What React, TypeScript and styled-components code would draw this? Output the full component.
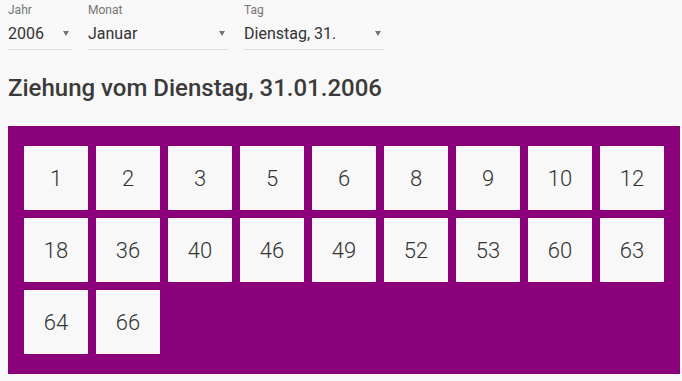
import React from "react";
import styled, { createGlobalStyle } from "styled-components";

const GlobalStyle = createGlobalStyle`
  html, body {
    margin: 0;
    padding: 0;
    background: #f8f8f8;
    font-family: Roboto, "Noto Sans", sans-serif;
    color: #333;
  }
`;

const Page = styled.div`
  padding: 0 2px 0 8px;
`;

const Filters = styled.div`
  display: flex;
  gap: 16px;
  padding-top: 3px;
`;

const Field = styled.div<{ $width: number }>`
  width: ${(p) => p.$width}px;
  display: flex;
  flex-direction: column;
`;

const Label = styled.span`
  font-size: 12px;
  line-height: 14px;
  color: #757575;
`;

const SelectBox = styled.div`
  display: flex;
  align-items: center;
  justify-content: space-between;
  height: 32px;
  border-bottom: 1px solid #dcdcdc;
  font-size: 16px;
  color: #333;
`;

const Arrow = styled.span`
  width: 0;
  height: 0;
  margin-right: 3px;
  border-left: 3.5px solid transparent;
  border-right: 3.5px solid transparent;
  border-top: 5px solid #757575;
`;

const Heading = styled.h2`
  margin: 22px 0 0;
  font-size: 24px;
  line-height: 32px;
  font-weight: 500;
  color: #3a3a3a;
`;

const Panel = styled.div`
  margin-top: 22px;
  background: #8b007b;
  padding: 20px 16px;
  display: grid;
  grid-template-columns: repeat(9, 64px);
  gap: 8px;
`;

const Ball = styled.div`
  height: 64px;
  background: #f8f8f8;
  display: flex;
  align-items: center;
  justify-content: center;
  font-size: 22px;
  font-weight: 300;
  color: #333;
`;

const numbers = [1, 2, 3, 5, 6, 8, 9, 10, 12, 18, 36, 40, 46, 49, 52, 53, 60, 63, 64, 66];

const Select = ({ label, value, width }: { label: string; value: string; width: number }) => (
  <Field $width={width}>
    <Label>{label}</Label>
    <SelectBox>
      <span>{value}</span>
      <Arrow />
    </SelectBox>
  </Field>
);

export default function App() {
  return (
    <Page>
      <GlobalStyle />
      <Filters>
        <Select label="Jahr" value="2006" width={64} />
        <Select label="Monat" value="Januar" width={140} />
        <Select label="Tag" value="Dienstag, 31." width={140} />
      </Filters>
      <Heading>Ziehung vom Dienstag, 31.01.2006</Heading>
      <Panel>
        {numbers.map((n) => (
          <Ball key={n}>{n}</Ball>
        ))}
      </Panel>
    </Page>
  );
}
